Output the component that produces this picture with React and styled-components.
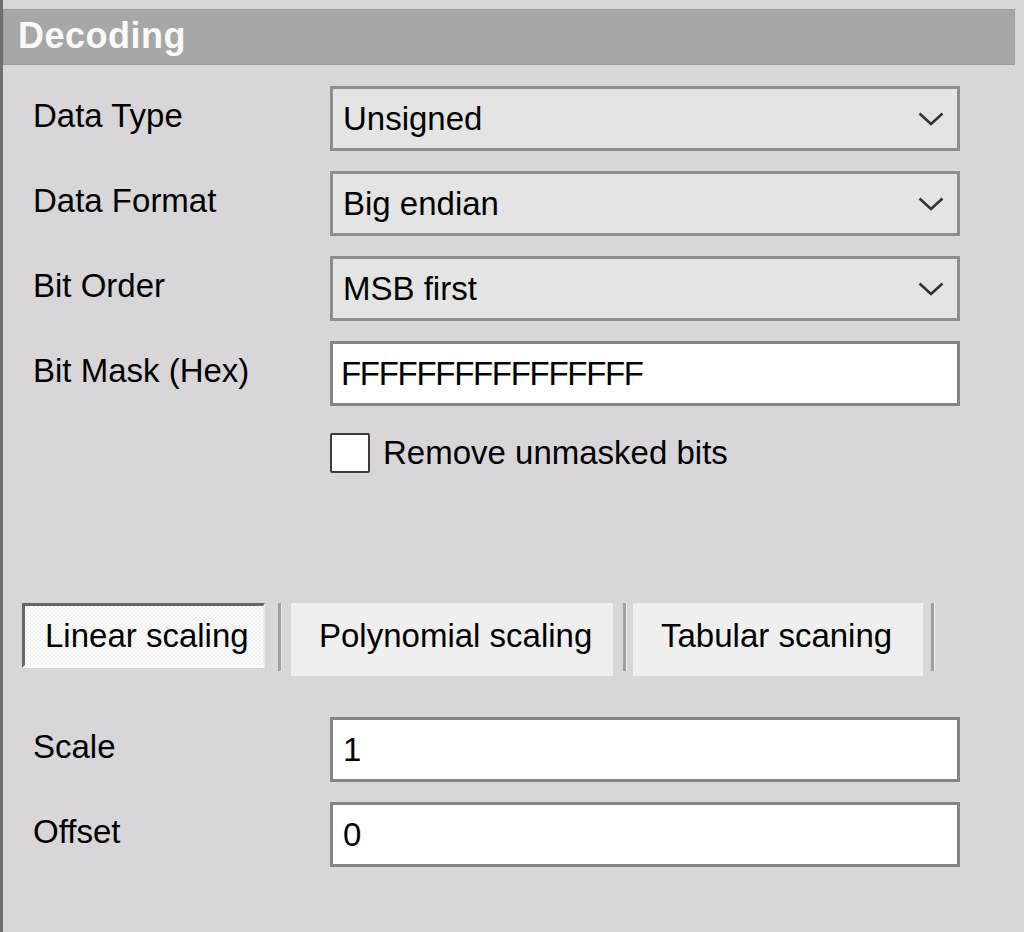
import React from "react";
import styled, { createGlobalStyle } from "styled-components";

const GlobalStyle = createGlobalStyle`
  html, body {
    margin: 0;
    padding: 0;
    background: #d8d6d9;
  }
  * {
    box-sizing: border-box;
  }
`;

const Panel = styled.div`
  min-height: 932px;
  border-left: 3px solid #6e6e6e;
  padding-top: 9px;
  background: #d8d6d9;
  font-family: "Liberation Sans", Arial, sans-serif;
  font-size: 33px;
  color: #000;
`;

const Header = styled.div`
  height: 56px;
  margin-right: 9px;
  background: #a7a7a7;
  border: 1px solid #9c9c9c;
  color: #fafafa;
  font-weight: bold;
  font-size: 36px;
  line-height: 52px;
  padding-left: 14px;
  letter-spacing: 0.5px;
`;

const Form = styled.div`
  display: flex;
  flex-direction: column;
  padding-left: 30px;
  padding-top: 21px;
`;

const Row = styled.div`
  display: grid;
  grid-template-columns: 297px 630px;
  align-items: center;
  height: 65px;
  margin-bottom: ${(p) => p.$gap ?? 20}px;
`;

const Label = styled.span`
  padding-bottom: 6px;
  white-space: nowrap;
`;

const Combo = styled.div`
  display: flex;
  align-items: center;
  justify-content: space-between;
  height: 65px;
  background: #e4e4e4;
  border: 3px solid #8e8e8e;
  padding: 0 13px 0 10px;
`;

const Field = styled.div`
  display: flex;
  align-items: center;
  height: 65px;
  background: #fff;
  border: 3px solid #858585;
  padding-left: ${(p) => p.$pad ?? 8}px;
  letter-spacing: ${(p) => (p.$tight ? "-1.3px" : "0")};
`;

const CheckRow = styled.label`
  display: flex;
  align-items: center;
  gap: 13px;
  margin-left: 297px;
  margin-top: 27px;
  height: 40px;
`;

const Box = styled.span`
  width: 40px;
  height: 40px;
  background: #fff;
  border: 2px solid #3c3c3c;
  border-radius: 2px;
`;

const Tabs = styled.div`
  display: flex;
  align-items: flex-start;
  margin-top: 130px;
  margin-left: -11px;
  margin-bottom: 41px;
`;

const Tab = styled.div`
  width: ${(p) => p.$w}px;
  height: ${(p) => (p.$active ? 65 : 73)}px;
  padding-top: ${(p) => (p.$active ? 10 : 13)}px;
  padding-left: ${(p) => p.$pad}px;
  line-height: 40px;
  white-space: nowrap;
  background: ${(p) =>
    p.$active
      ? "repeating-conic-gradient(#fdfdfd 0 25%, #f1f1f1 0 50%) 0 0 / 4px 4px"
      : "#efefef"};
  border-top: ${(p) => (p.$active ? "3px solid #666" : "none")};
  border-left: ${(p) => (p.$active ? "3px solid #666" : "none")};
  border-right: ${(p) => (p.$active ? "2px solid #e9e9e9" : "none")};
  border-bottom: ${(p) => (p.$active ? "3px solid #fff" : "none")};
`;

const Divider = styled.span`
  width: 4px;
  height: 68px;
  margin: 0 ${(p) => p.$r}px 0 ${(p) => p.$l}px;
  border-left: 3px solid #9f9f9f;
  border-right: 1px solid #ececec;
`;

const Chevron = () => (
  <svg width="26" height="14" viewBox="0 0 26 14">
    <polyline
      points="1.5,1.5 13,12 24.5,1.5"
      fill="none"
      stroke="#333"
      strokeWidth="2.6"
    />
  </svg>
);

const App = () => {
  const combos = [
    ["Data Type", "Unsigned"],
    ["Data Format", "Big endian"],
    ["Bit Order", "MSB first"],
  ];

  return (
    <Panel>
      <GlobalStyle />
      <Header>Decoding</Header>
      <Form>
        {combos.map(([label, value]) => (
          <Row key={label}>
            <Label>{label}</Label>
            <Combo>
              <span>{value}</span>
              <Chevron />
            </Combo>
          </Row>
        ))}
        <Row $gap={0}>
          <Label>Bit Mask (Hex)</Label>
          <Field $tight>FFFFFFFFFFFFFFFF</Field>
        </Row>
        <CheckRow>
          <Box />
          <span>Remove unmasked bits</span>
        </CheckRow>

        <Tabs>
          <Tab $active $w={243} $pad={20}>Linear scaling</Tab>
          <Divider $l={13} $r={9} />
          <Tab $w={322} $pad={28}>Polynomial scaling</Tab>
          <Divider $l={10} $r={6} />
          <Tab $w={290} $pad={28}>Tabular scaning</Tab>
          <Divider $l={8} $r={0} />
        </Tabs>

        <Row>
          <Label>Scale</Label>
          <Field $pad={10}>1</Field>
        </Row>
        <Row>
          <Label>Offset</Label>
          <Field $pad={10}>0</Field>
        </Row>
      </Form>
    </Panel>
  );
};

export default App;
